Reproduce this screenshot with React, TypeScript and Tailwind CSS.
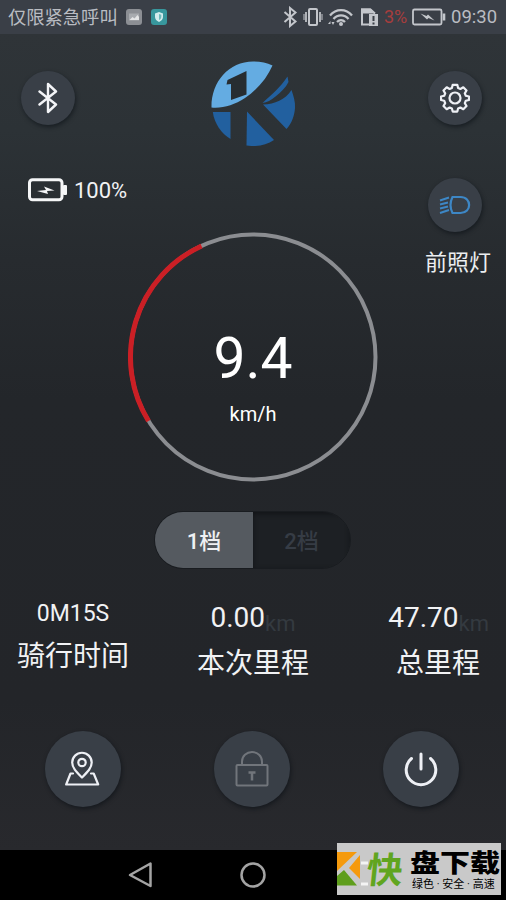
import type { ReactNode } from 'react';
import clsx from 'clsx';

const stats = [
  { value: '0M15S', label: '骑行时间' },
  { value: '0.00', unit: 'km', label: '本次里程' },
  { value: '47.70', unit: 'km', label: '总里程' },
];

function RoundButton({ size = 'sm', children }: { size?: 'sm' | 'lg'; children: ReactNode }) {
  return (
    <button
      className={clsx(
        'flex shrink-0 items-center justify-center rounded-full bg-[#393f47] shadow-[1px_2px_4px_rgba(8,12,18,0.55)]',
        size === 'sm' ? 'size-[54px]' : 'size-[76px]'
      )}
    >
      {children}
    </button>
  );
}

function StatusBar() {
  return (
    <div className="flex h-[34px] items-center bg-[#3a3f47] pl-2 text-[#b9bcc2]">
      <span className="w-[117px] pt-[2px] text-[18.3px] leading-[32px] whitespace-nowrap">仅限紧急呼叫</span>
      <svg className="h-4 w-[42px]" viewBox="0 0 42 16">
        <rect x="1" y="0" width="16" height="16" rx="3" fill="#8c8f94" />
        <path d="M4 4.500h10v7h-10z" fill="#a8abaf" />
        <path d="M4.500 11l3-3 2 1.500 3-3.500 1.500 2v3z" fill="#e4e5e6" />
        <rect x="26" y="0" width="16" height="16" rx="3" fill="#38979d" />
        <path d="M34 3l4 1.500v3.500c0 2.300-1.600 4-4 5-2.400-1-4-2.700-4-5v-3.500z" fill="#d3eced" />
        <path d="M34 5v6c1.500-.8 2.300-1.800 2.300-3.300v-1.900z" fill="#6eb9bc" />
      </svg>
      <svg className="ml-[116px] h-[22px] w-[97px]" viewBox="283 6 97 22" fill="none" stroke="#c3c6cb" strokeWidth="2">
        <path d="M284.500 12l11 9.500-5.500 4.500v-18l5.500 4.500-11 9.500" />
        <rect x="309" y="9" width="8" height="16" rx="1" />
        <path d="M306 12v10M320 12v10" strokeWidth="1.700" />
        <path d="M304 14v6M322 14v6" strokeWidth="1" />
        <path d="M330 15.500c6-7.300 16-7.300 22 0M333.500 19c4-4.800 11-4.800 15 0M337 22c2.500-2.600 5.500-2.600 8 0" strokeWidth="2.300" />
        <circle cx="341" cy="24" r="2" fill="#c3c6cb" stroke="none" />
        <path d="M328 24l2.500-3v3zM331.500 22h3l-1.500 3z" fill="#c3c6cb" stroke="none" />
        <path d="M369 24.500h-7v-15h8.500l4.500 4" />
        <path d="M361 8.500h9.500l4.500 5h-14z" fill="#c3c6cb" stroke="none" />
        <rect x="369" y="14" width="9" height="12" fill="#c3c6cb" stroke="none" />
        <path d="M373.500 16v5M373.500 22.500v2" stroke="#3a3f47" />
      </svg>
      <span className="ml-1 w-7 text-[18px] leading-[34px] text-[#a63d3d]">3%</span>
      <svg className="h-[18px] w-[34px]" viewBox="412 8 34 18" fill="none" stroke="#c3c6cb" strokeWidth="1.800">
        <rect x="413" y="9.500" width="28.500" height="15" rx="1.500" />
        <path d="M444 13.500v7" strokeWidth="2.600" />
        <path d="M420.500 13.500l6 2.500 1.500-1.500 6.500 6-6-2.500-1.500 1.500z" fill="#c3c6cb" stroke="none" />
      </svg>
      <span className="ml-[5px] text-[18.500px] leading-[34px]">09:30</span>
    </div>
  );
}

function Logo() {
  return (
    <svg className="size-[86px]" viewBox="210 60 86 86">
      <path d="M211.500 107.500C211 82 229 61 254 61.500c7 0 13 1.500 18.500 4C267 78 258 89 245 98c-11 7-22 10.500-33.500 9.500z" fill="#64ace2" />
      <path d="M227.500 80l19-9v23.500l-15.500 5.500v-16l-4.500.5z" fill="#272d31" />
      <path d="M212.800 112h17.700v27c-9-5.500-16-15-17.700-27z" fill="#22609f" />
      <path d="M247 111.500l27 28.500c-8 5.500-18 7-27.500 5.500z" fill="#22609f" />
      <path d="M262.500 103c9.500-9 17.500-15 25-26.500l1 5.500c-3 6-7.500 10-13 14.500-4.500 3.500-8.500 6-13 6.500z" fill="#22609f" />
      <path d="M263 104.500c12-.5 22-4.500 28.500-14.500 2 6 4 12 3.500 18-.5 7.500-3 15-8.500 21z" fill="#22609f" />
    </svg>
  );
}

function Speedometer({ speed }: { speed: string }) {
  return (
    <div className="grid size-[250px] place-items-center">
      <svg className="col-start-1 row-start-1 size-[250px]" viewBox="0 0 250 250" fill="none">
        <circle cx="125" cy="125" r="122.500" stroke="#8b8d91" strokeWidth="4" />
        <path d="M73.500 13.900A122.500 122.500 0 0 0 20.500 189" stroke="#cb1f25" strokeWidth="5" />
      </svg>
      <div className="col-start-1 row-start-1 flex flex-col items-center pt-[36px] text-white">
        <span className="text-[57px] leading-[68px]">{speed}</span>
        <span className="mt-[9px] text-[20px] leading-6">km/h</span>
      </div>
    </div>
  );
}

function GearSwitch() {
  return (
    <div className="mt-[28px] ml-[154px] flex h-[58px] w-[197px] overflow-hidden rounded-full border border-[#191c20] text-[22px] font-medium">
      <button className="h-full w-[98px] bg-[#555a60] pt-[2px] text-[#eef0f3]">1档</button>
      <button className="h-full flex-1 bg-[#1d2024] pt-[2px] text-[#363c45] shadow-[inset_0_2px_5px_#121417]">2档</button>
    </div>
  );
}

function Stats() {
  const [time, trip, total] = stats;
  return (
    <div className="mt-[28px] flex h-[90px] text-[#f1f2f4]">
      <div className="flex w-[146px] flex-col items-center">
        <span className="mt-[3px] text-[23px] leading-[28px]">{time.value}</span>
        <span className="mt-[9px] text-[28px] leading-[40px]">{time.label}</span>
      </div>
      {[trip, total].map(s => (
        <div key={s.label} className={clsx('flex flex-col', s === trip ? 'ml-[46px] w-[122px] items-center' : 'ml-[65px] w-[110px] items-end')}>
          <span className="flex items-start text-[28px] leading-[41px] whitespace-nowrap">
            {s.value}
            <span className="text-[22px] leading-[53px] text-[#343a40]">{s.unit}</span>
          </span>
          <span className={clsx('-mt-[6px] text-[28px] leading-[40px]', s === total && 'mr-[9px]')}>{s.label}</span>
        </div>
      ))}
    </div>
  );
}

function Watermark() {
  return (
    <div className="absolute top-[843px] left-[337px] flex h-[52px] w-[164px] bg-[#c9c9c9]">
      <svg className="h-[52px] w-[31px] shrink-0" viewBox="0 0 31 52">
        <path d="M0 9h20L0 28z" fill="#f59a0d" />
        <path d="M23 12v24L12 25z" fill="#f59a0d" />
        <path d="M0 33l7-6 13 15.500H0z" fill="#5f9e1c" />
        <path d="M24 20h7M24 41h7" stroke="#f4f4f4" strokeWidth="3" />
      </svg>
      <span className="-ml-px w-[43px] text-[36px] leading-[56px] font-bold text-[#60a51f] [transform:skewX(-6deg)]">快</span>
      <div className="flex flex-col pt-[4px] text-black">
        <span className="text-[30px] leading-[34px] font-black whitespace-nowrap [transform:scaleY(0.82)]">盘下载</span>
        <span className="-mt-[2px] pl-[2px] text-[11px] leading-[12px] whitespace-nowrap">绿色 · 安全 · 高速</span>
      </div>
    </div>
  );
}

export default function App() {
  return (
    <div className="relative flex h-[900px] w-[506px] flex-col overflow-hidden bg-[linear-gradient(#2f3438_34px,#2c3236_130px,#272b2f_260px,#23262a_400px,#232529_700px,#28292d_850px)] font-['Roboto','Noto_Sans_CJK_SC',sans-serif]">
      <StatusBar />

      <div className="flex h-[449px] justify-between">
        <div className="flex w-[128px] flex-col pt-[37px] pl-[21px]">
          <RoundButton>
            <svg className="h-[32px] w-5" viewBox="0 0 20 32" fill="none" stroke="#f3f4f7" strokeWidth="2.400" strokeLinejoin="round" strokeLinecap="round">
              <path d="M1.500 9.500L18 22.500l-8 7.500V2l8 7.500L1.500 22.500" />
            </svg>
          </RoundButton>
          <div className="mt-[51px] flex items-center gap-[7px] pl-[7px] whitespace-nowrap text-[#f1f2f4]">
            <svg className="h-[24px] w-[39px] shrink-0" viewBox="0 0 39 24">
              <rect x="1.500" y="1.800" width="32.500" height="20" rx="3" fill="none" stroke="#f5f6f7" strokeWidth="3" />
              <rect x="35" y="7" width="4" height="10" rx="1" fill="#f5f6f7" />
              <path d="M9 13l9-1-2-3.500L26.500 12.500 19 13l1 3z" fill="#f5f6f7" />
            </svg>
            <span className="pt-[2px] text-[22px] leading-[26px]">100%</span>
          </div>
        </div>

        <div className="flex w-[250px] flex-col items-center pt-[26px]">
          <Logo />
          <div className="mt-[86px]">
            <Speedometer speed="9.4" />
          </div>
        </div>

        <div className="flex w-[128px] flex-col items-end pt-[37px] pr-[24px]">
          <RoundButton>
            <svg className="size-[30px]" viewBox="0 0 30 30" fill="none" stroke="#eef0f5" strokeWidth="2.200" strokeLinejoin="round">
              <path d="M12.700 1.800h4.600l.8 3.200 2.300 1 2.900-1.700 3.200 3.200-1.700 2.900 1 2.300 3.200.8v3.500l-3.200.8-1 2.300 1.700 2.900-3.200 3.200-2.900-1.700-2.300 1-.8 3.100h-4.600l-.8-3.100-2.300-1-2.900 1.700-3.200-3.200 1.700-2.900-1-2.300-3.200-.8v-3.500l3.200-.8 1-2.300-1.700-2.900 3.200-3.200 2.900 1.700 2.300-1z" />
              <circle cx="15" cy="15" r="5.500" />
            </svg>
          </RoundButton>
          <div className="mt-[53px]">
            <RoundButton>
              <svg className="h-6 w-8" viewBox="0 0 32 24" fill="none" stroke="#3d87c6" strokeWidth="2.200">
                <path d="M13.500 4h8c11.500 0 11.500 16 0 16h-8C11 15 11 9 13.500 4z" />
                <path d="M1 7.500l9-3M1 11.500l8-2M1 15.500l8-2M1 20l9-3" strokeWidth="1.900" />
              </svg>
            </RoundButton>
          </div>
          <span className="mt-[15px] -mr-[9px] text-[22px] leading-8 whitespace-nowrap text-[#eceef0]">前照灯</span>
        </div>
      </div>

      <GearSwitch />
      <Stats />

      <div className="mt-[44px] flex h-[119px] justify-between pr-[47px] pl-[45px]">
        <RoundButton size="lg">
          <svg className="size-9" viewBox="0 0 36 36" fill="none" stroke="#eef0f5" strokeWidth="2.200" strokeLinejoin="round" strokeLinecap="round">
            <path d="M17 26.500C11.500 21 7.200 17 7.200 11.500a9.700 9.700 0 0 1 19.500 0C26.700 17 22.500 21 17 26.500z" />
            <circle cx="17" cy="11.500" r="3.700" />
            <path d="M8 22.500H5.500L1.200 33.500h32l-4.500-11H26" />
          </svg>
        </RoundButton>
        <RoundButton size="lg">
          <svg className="size-9" viewBox="0 0 36 36" fill="none" stroke="#71757b" strokeWidth="2">
            <rect x="2.500" y="14" width="31" height="20.500" rx="1" />
            <path d="M8 14v-3.500a10 9.500 0 0 1 20 0V14" />
            <path d="M14.500 21.500h7M18 21.500v8" strokeWidth="2.500" />
          </svg>
        </RoundButton>
        <RoundButton size="lg">
          <svg className="size-9" viewBox="0 0 36 36" fill="none" stroke="#eef0f5" strokeWidth="3" strokeLinecap="round">
            <path d="M8.500 7.500a14.800 14.800 0 1 0 19 0" />
            <path d="M18 3v15" />
          </svg>
        </RoundButton>
      </div>

      <div className="flex h-[50px] items-center bg-black pl-[127px]">
        <svg className="size-[28px]" viewBox="0 0 28 28" fill="none" stroke="#a4a4a4" strokeWidth="2.500" strokeLinejoin="round">
          <path d="M3 14L23.500 2.500v22.500z" />
        </svg>
        <svg className="ml-[84px] size-[28px]" viewBox="0 0 28 28" fill="none" stroke="#a4a4a4" strokeWidth="2.500">
          <circle cx="14" cy="14" r="11.500" />
        </svg>
      </div>

      <Watermark />
    </div>
  );
}
